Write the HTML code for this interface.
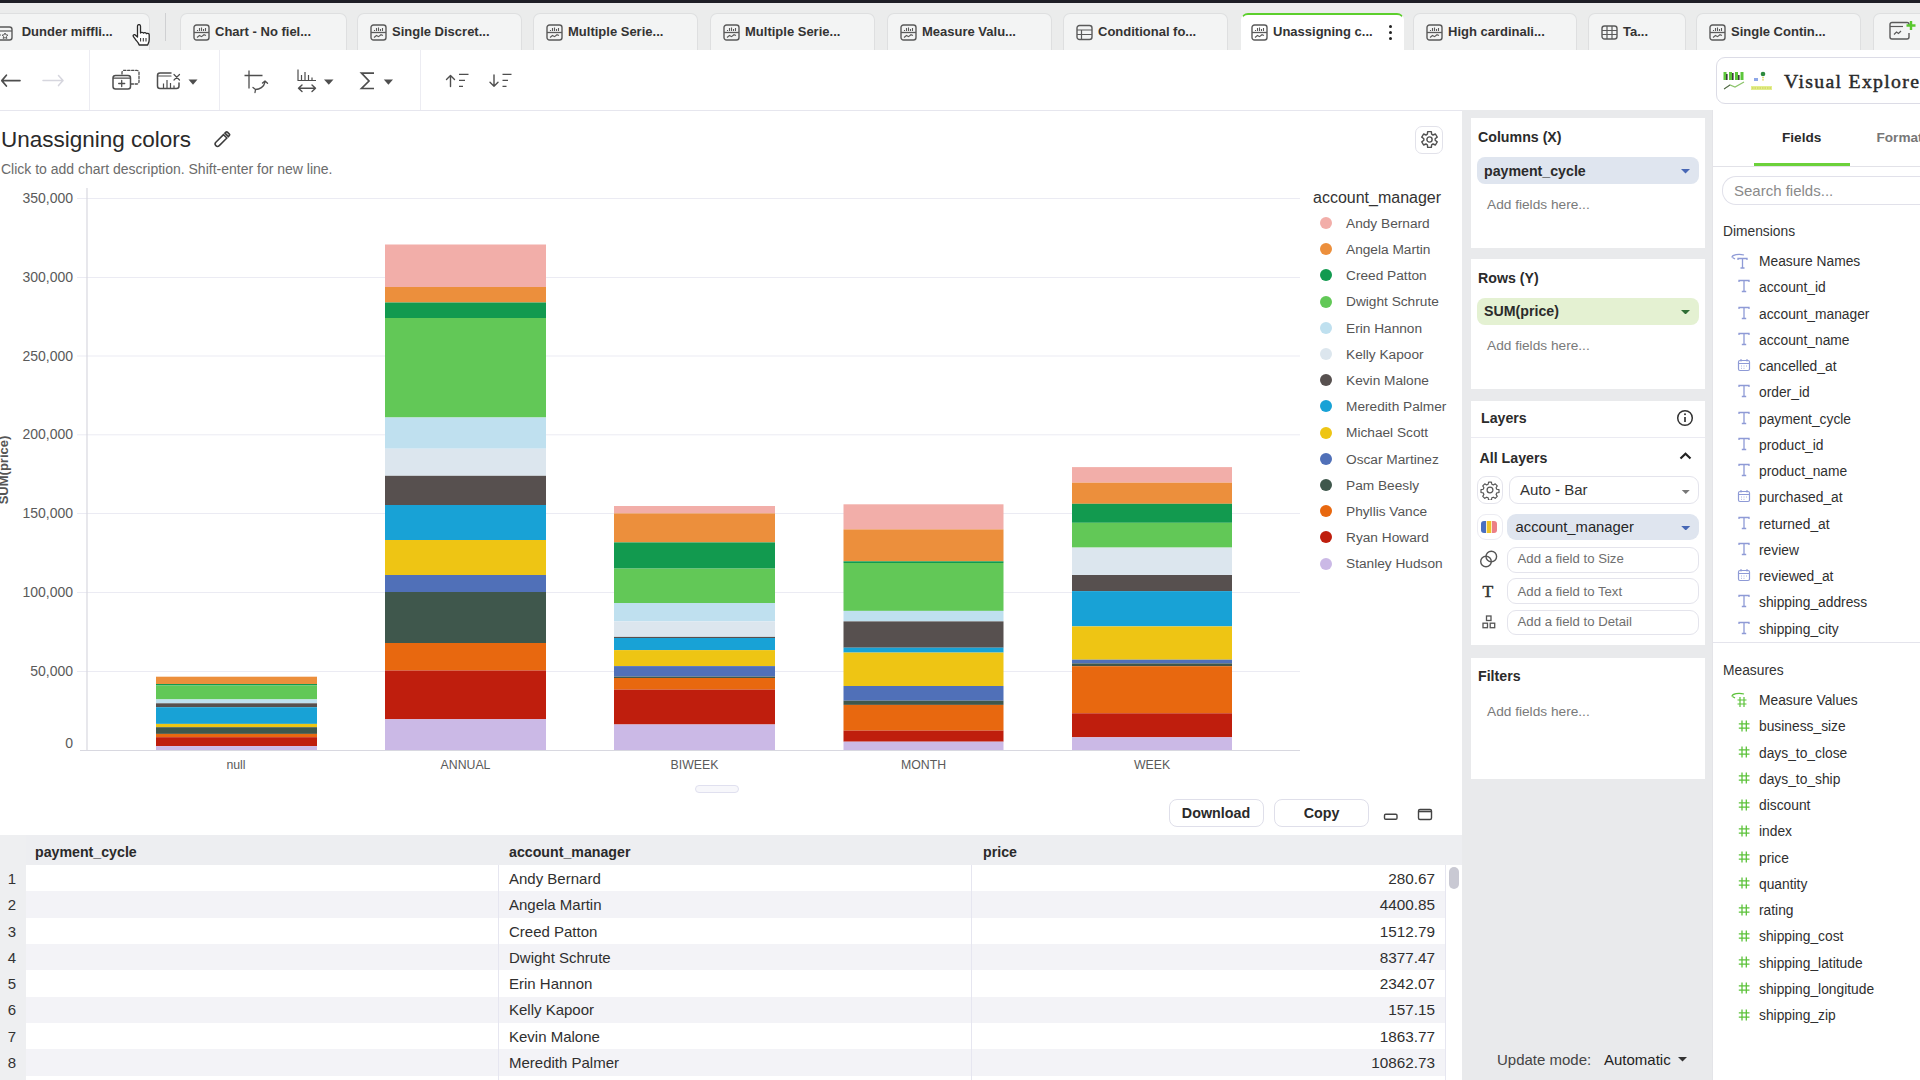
<!DOCTYPE html>
<html><head><meta charset="utf-8">
<style>
*{box-sizing:border-box;margin:0;padding:0}
html,body{width:1920px;height:1080px;overflow:hidden;background:#fff;font-family:"Liberation Sans",sans-serif;color:#2b2b2b}
.a{position:absolute}
.t{position:absolute;white-space:nowrap;line-height:20px}
#topbar{left:0;top:0;width:1920px;height:3px;background:#1d1d25}
#tabbar{left:0;top:3px;width:1920px;height:47px;background:#ebecec}
.tab{position:absolute;top:13px;height:37px;background:#f3f4f4;border:1px solid #dedfe0;border-bottom:none;border-radius:7px 7px 0 0}
.tab .tx{position:absolute;left:34px;top:8px;font-weight:bold;font-size:13px;color:#333;line-height:20px;white-space:nowrap}
.tab svg{position:absolute;left:12px;top:10px}
.tab.act{background:#fff;border-color:#fff;border-top:2px solid #5ccf2c}
.tab.act svg{left:9px;top:8.5px}
.tab.act .tx{left:31px;top:7.3px}
#toolbar{left:0;top:50px;width:1920px;height:61px;background:#fff;border-bottom:1px solid #e6e6ee}
.sep{position:absolute;top:0;width:1px;height:60px;background:#ececf2}
#rp{left:1462px;top:110px;width:250px;height:970px;background:#e9eaec}
.card{position:absolute;left:8px;width:235px;background:#fff}
.ch{position:absolute;left:8px;font-weight:bold;font-size:14px;color:#2b2b2b;line-height:20px;white-space:nowrap}
.pill{position:absolute;left:7px;width:221px;height:25px;border-radius:8px}
.pill .tx{position:absolute;left:7px;top:2px;font-weight:bold;font-size:14px;line-height:20px;color:#2b2b2b}
.addf{position:absolute;left:16px;font-size:13.7px;color:#777;line-height:20px;white-space:nowrap}
#fp{left:1712px;top:110px;width:208px;height:970px;background:#fff;border-left:1px solid #e4e4e8}
.fi{position:absolute;left:46px;font-size:13.6px;color:#2f2f2f;line-height:18px;white-space:nowrap}
.fic{position:absolute;left:28px}
</style></head><body>
<div id="topbar" class="a"></div>
<div id="tabbar" class="a"></div>
<div class="a" style="left:0;top:0;width:1920px;height:50px">
<div class="tab" style="left:-14px;width:164px"><svg style="left:8.5px;top:10.5px" width="17" height="17" viewBox="0 0 17 17"><rect x="1" y="2" width="15" height="13" rx="2.5" fill="none" stroke="#5a5a5a" stroke-width="1.4"/><path d="M1 6H16" stroke="#5a5a5a" stroke-width="1.2"/><path d="M2 10H5M9 8l0.9 1.8 2 0.3-1.45 1.4 0.35 2-1.8-0.95-1.8 0.95 0.35-2-1.45-1.4 2-0.3z" stroke="#5a5a5a" stroke-width="1" fill="none"/></svg><div class="tx" style="left:34.7px">Dunder miffli...</div></div>
<div class="tab" style="left:180px;width:167px"><svg width="17" height="17" viewBox="0 0 17 17"><rect x="1" y="1" width="15" height="15" rx="2.5" fill="none" stroke="#5a5a5a" stroke-width="1.4"/><path d="M1 8.5H16" stroke="#5a5a5a" stroke-width="1.3"/><path d="M4.5 7V6M6.5 7V4M8.5 7V3.5M10.5 7V5M12.5 7V4" stroke="#5a5a5a" stroke-width="1.1"/><path d="M4 13.5l2.5-2 2 1.2 2.5-2 2 0.8" fill="none" stroke="#5a5a5a" stroke-width="1.1"/></svg><div class="tx">Chart - No fiel...</div></div>
<div class="tab" style="left:357px;width:165px"><svg width="17" height="17" viewBox="0 0 17 17"><rect x="1" y="1" width="15" height="15" rx="2.5" fill="none" stroke="#5a5a5a" stroke-width="1.4"/><path d="M1 8.5H16" stroke="#5a5a5a" stroke-width="1.3"/><path d="M4.5 7V6M6.5 7V4M8.5 7V3.5M10.5 7V5M12.5 7V4" stroke="#5a5a5a" stroke-width="1.1"/><path d="M4 13.5l2.5-2 2 1.2 2.5-2 2 0.8" fill="none" stroke="#5a5a5a" stroke-width="1.1"/></svg><div class="tx">Single Discret...</div></div>
<div class="tab" style="left:533px;width:165px"><svg width="17" height="17" viewBox="0 0 17 17"><rect x="1" y="1" width="15" height="15" rx="2.5" fill="none" stroke="#5a5a5a" stroke-width="1.4"/><path d="M1 8.5H16" stroke="#5a5a5a" stroke-width="1.3"/><path d="M4.5 7V6M6.5 7V4M8.5 7V3.5M10.5 7V5M12.5 7V4" stroke="#5a5a5a" stroke-width="1.1"/><path d="M4 13.5l2.5-2 2 1.2 2.5-2 2 0.8" fill="none" stroke="#5a5a5a" stroke-width="1.1"/></svg><div class="tx">Multiple Serie...</div></div>
<div class="tab" style="left:710px;width:165px"><svg width="17" height="17" viewBox="0 0 17 17"><rect x="1" y="1" width="15" height="15" rx="2.5" fill="none" stroke="#5a5a5a" stroke-width="1.4"/><path d="M1 8.5H16" stroke="#5a5a5a" stroke-width="1.3"/><path d="M4.5 7V6M6.5 7V4M8.5 7V3.5M10.5 7V5M12.5 7V4" stroke="#5a5a5a" stroke-width="1.1"/><path d="M4 13.5l2.5-2 2 1.2 2.5-2 2 0.8" fill="none" stroke="#5a5a5a" stroke-width="1.1"/></svg><div class="tx">Multiple Serie...</div></div>
<div class="tab" style="left:887px;width:165px"><svg width="17" height="17" viewBox="0 0 17 17"><rect x="1" y="1" width="15" height="15" rx="2.5" fill="none" stroke="#5a5a5a" stroke-width="1.4"/><path d="M1 8.5H16" stroke="#5a5a5a" stroke-width="1.3"/><path d="M4.5 7V6M6.5 7V4M8.5 7V3.5M10.5 7V5M12.5 7V4" stroke="#5a5a5a" stroke-width="1.1"/><path d="M4 13.5l2.5-2 2 1.2 2.5-2 2 0.8" fill="none" stroke="#5a5a5a" stroke-width="1.1"/></svg><div class="tx">Measure Valu...</div></div>
<div class="tab" style="left:1063px;width:165px"><svg width="17" height="17" viewBox="0 0 17 17"><rect x="1" y="1.5" width="15" height="14" rx="2.5" fill="none" stroke="#5a5a5a" stroke-width="1.4"/><path d="M1 6H16M1 10.5H16M5.5 6V15.5" stroke="#5a5a5a" stroke-width="1.2"/></svg><div class="tx">Conditional fo...</div></div>
<div class="tab act" style="left:1241px;width:163px"><svg width="17" height="17" viewBox="0 0 17 17"><rect x="1" y="1" width="15" height="15" rx="2.5" fill="none" stroke="#5a5a5a" stroke-width="1.4"/><path d="M1 8.5H16" stroke="#5a5a5a" stroke-width="1.3"/><path d="M4.5 7V6M6.5 7V4M8.5 7V3.5M10.5 7V5M12.5 7V4" stroke="#5a5a5a" stroke-width="1.1"/><path d="M4 13.5l2.5-2 2 1.2 2.5-2 2 0.8" fill="none" stroke="#5a5a5a" stroke-width="1.1"/></svg><div class="tx">Unassigning c...</div><div class="a" style="left:147px;top:10px;width:4px;height:16px"><div class="a" style="left:0;top:0;width:3.2px;height:3.2px;border-radius:2px;background:#222"></div><div class="a" style="left:0;top:6px;width:3.2px;height:3.2px;border-radius:2px;background:#222"></div><div class="a" style="left:0;top:12px;width:3.2px;height:3.2px;border-radius:2px;background:#222"></div></div></div>
<div class="tab" style="left:1413px;width:164px"><svg width="17" height="17" viewBox="0 0 17 17"><rect x="1" y="1" width="15" height="15" rx="2.5" fill="none" stroke="#5a5a5a" stroke-width="1.4"/><path d="M1 8.5H16" stroke="#5a5a5a" stroke-width="1.3"/><path d="M4.5 7V6M6.5 7V4M8.5 7V3.5M10.5 7V5M12.5 7V4" stroke="#5a5a5a" stroke-width="1.1"/><path d="M4 13.5l2.5-2 2 1.2 2.5-2 2 0.8" fill="none" stroke="#5a5a5a" stroke-width="1.1"/></svg><div class="tx">High cardinali...</div></div>
<div class="tab" style="left:1588px;width:98px"><svg width="17" height="17" viewBox="0 0 17 17"><rect x="1" y="2" width="15" height="13" rx="2.5" fill="none" stroke="#5a5a5a" stroke-width="1.4"/><path d="M1 6.5H16M1 10.5H16M6 2V15M11 2V15" stroke="#5a5a5a" stroke-width="1.2"/></svg><div class="tx">Ta...</div></div>
<div class="tab" style="left:1696px;width:165px"><svg width="17" height="17" viewBox="0 0 17 17"><rect x="1" y="1" width="15" height="15" rx="2.5" fill="none" stroke="#5a5a5a" stroke-width="1.4"/><path d="M1 8.5H16" stroke="#5a5a5a" stroke-width="1.3"/><path d="M4.5 7V6M6.5 7V4M8.5 7V3.5M10.5 7V5M12.5 7V4" stroke="#5a5a5a" stroke-width="1.1"/><path d="M4 13.5l2.5-2 2 1.2 2.5-2 2 0.8" fill="none" stroke="#5a5a5a" stroke-width="1.1"/></svg><div class="tx">Single Contin...</div></div>
<div class="tab" style="left:1873px;width:80px"><svg style="left:14px;top:6px;position:absolute" width="30" height="22" viewBox="0 0 30 22"><path d="M21 6V4.5a2 2 0 0 0-2-2H4a2 2 0 0 0-2 2V17a2 2 0 0 0 2 2h15a2 2 0 0 0 2-2v-4" fill="none" stroke="#5a5a5a" stroke-width="1.4"/><path d="M2 6.5H15" stroke="#5a5a5a" stroke-width="1.2"/><path d="M6 14.5l2.5-2.5 2 1.5 2.5-2.5" fill="none" stroke="#5a5a5a" stroke-width="1.2"/><path d="M23 1V10M18.5 5.5H27.5" stroke="#59c82e" stroke-width="2.4"/></svg></div>
<div class="a" style="left:165px;top:13px;width:1px;height:28px;background:#cfd0d2"></div>
<svg class="a" style="left:132px;top:24px" width="20" height="23" viewBox="0 0 20 23"><path d="M5.5 2.2c0-1 .7-1.6 1.5-1.6s1.5.6 1.5 1.6V9c.3-.9 2.8-.9 3 .2.5-.8 2.6-.7 2.9.5.6-.6 2.6-.4 2.8.9v5.2c0 2.5-1 3.6-1.6 5.2H7.2C6.6 19 5.4 17.8 4 16.2L1.4 12.6c-.7-1 .2-2.4 1.5-1.9l2.6 2.3Z" fill="#fff" stroke="#2a2a2a" stroke-width="1.3" stroke-linejoin="round"/><path d="M8.6 14V17.5M11.3 14V17.5M14 14V17.5" stroke="#2a2a2a" stroke-width="1"/></svg>
</div>
<div id="toolbar" class="a"></div>
<svg class="a" style="left:0;top:0" width="540" height="110" viewBox="0 0 540 110">
<g fill="none" stroke="#4e4e4e" stroke-width="1.5" stroke-linecap="round" stroke-linejoin="round">
<path d="M2 80.6H20M1.8 80.6l4.6-5.4M1.8 80.6l4.6 5.4" stroke-width="1.7"/>
<path d="M43 80.6H63M63 80.6l-4.5-5M63 80.6l-4.5 5" stroke="#d6d6de"/>
<rect x="113" y="75.5" width="17.5" height="13.5" rx="2.5"/>
<path d="M113.5 78.2H130" stroke-width="1.3"/>
<path d="M121.7 80.5V86.5M118.7 83.5H124.7" stroke-width="1.3"/>
<path d="M122 74V72.5a2.2 2.2 0 0 1 2.2-2.2H136.8a2.2 2.2 0 0 1 2.2 2.2V81.8a2.2 2.2 0 0 1-2.2 2.2H131" stroke-dasharray="2.4 1.6" stroke-width="1.3"/>
<path d="M171 73H160a2.5 2.5 0 0 0-2.5 2.5V86a2.5 2.5 0 0 0 2.5 2.5H176.5a2.5 2.5 0 0 0 2.5-2.5V83"/>
<path d="M158 76H171" stroke-width="1.2"/>
<path d="M163.5 88V83.5M167 88V80M170.5 88V83M174 88V85.5" stroke-width="1.2" stroke-linecap="butt"/>
<path d="M174 74.5l5.5 5.5M179.5 74.5l-5.5 5.5" stroke-width="1.2"/>
<path d="M249 70.5V88.5M244.5 75.5H262.5" stroke-width="1.3" stroke-linecap="butt"/>
<path d="M255.5 89.5c4 0 8.5-2.5 9.5-7.5M253 87.5l2.5 2 -0.5 3M262.5 83l2.5-2 2.5 2.3" stroke-width="1.3"/>
<path d="M298 69.5V80.5H316M301.5 80.5V75M305 80.5V72M308.5 80.5V75M312 80.5V77.5" stroke-width="1.2" stroke-linecap="butt"/>
<path d="M298.5 88.3H315.5M298.5 88.3l3.5-3.3M298.5 88.3l3.5 3.3M315.5 88.3l-3.5-3.3M315.5 88.3l-3.5 3.3" stroke-width="1.4"/>
<path d="M374 73.2H361.5L369 81L361.5 88.5H374" stroke-width="1.7" stroke-linecap="butt" stroke-linejoin="miter"/>
<path d="M450.5 86.5V75.5M446.5 79.5l4-4 4 4" stroke-width="1.4"/>
<path d="M459 74.3H468.5M459 80.3H465M459 86.3H463" stroke-width="1.2" stroke-linecap="butt"/>
<path d="M494 75V86.2M490 82.2l4 4 4-4" stroke-width="1.4"/>
<path d="M502.5 74.3H511.5M502.5 80.3H508M502.5 86.3H506.5" stroke-width="1.2" stroke-linecap="butt"/>
</g>
<g fill="#4e4e4e">
<path d="M188.5 79.5H197.5L193 84.8Z"/>
<path d="M324 79.5H333.5L328.8 84.8Z"/>
<path d="M383.8 79.5H393L388.4 84.8Z"/>
</g>
</svg>
<div class="sep" style="left:89px;top:50px"></div>
<div class="sep" style="left:219px;top:50px"></div>
<div class="sep" style="left:420px;top:50px"></div>
<div class="a" style="left:1716px;top:57px;width:240px;height:47px;border:1px solid #dcdce6;border-radius:9px;background:#fff"></div>
<svg class="a" style="left:1720px;top:66px" width="60" height="30" viewBox="0 0 60 30">
<g fill="#5cc63a"><rect x="3.5" y="6" width="3" height="8"/><rect x="9" y="6" width="3" height="8"/><rect x="15" y="6" width="3" height="8"/><rect x="20.5" y="6" width="3" height="8"/></g>
<g fill="#3a3a3a"><rect x="6" y="8" width="1.6" height="6"/><rect x="12" y="7" width="1.6" height="7"/><rect x="18" y="9" width="1.6" height="5"/></g>
<path d="M4 23l6-4 5 2 9-5" fill="none" stroke="#8bc46a" stroke-width="1.2"/>
<path d="M4 23l6-4" fill="none" stroke="#555" stroke-width="1"/>
<circle cx="43" cy="8" r="2.3" fill="#2e8b3e"/>
<path d="M43 11v4" stroke="#e1d24a" stroke-width="1.5" stroke-dasharray="1.2 1"/>
<rect x="34" y="12" width="4" height="3" fill="#8ea7e8"/>
<rect x="31" y="20" width="21" height="4" fill="#e2ef8e"/>
<path d="M32 22h19" stroke="#c9c442" stroke-width="0.9" stroke-dasharray="1.5 1"/>
</svg>
<div class="t" style="left:1784px;top:68.5px;font-family:'Liberation Serif',serif;font-size:19.8px;-webkit-text-stroke:0.45px #2a2a2a;letter-spacing:1.3px;color:#2a2a2a;line-height:24px">Visual Explorer</div>
<div class="t" style="left:1px;top:127px;font-size:22.5px;color:#2a2a2a;line-height:26px">Unassigning colors</div>
<svg class="a" style="left:205px;top:125px" width="32" height="32" viewBox="0 0 32 32"><g transform="translate(16.3 15.2) rotate(45)" fill="none" stroke="#3c3c3c" stroke-width="1.5"><path d="M-2.4 -5.5V5.3a2.4 2.4 0 0 0 4.8 0V-5.5Z"/><path d="M-2.4 -7.6V-9a1 1 0 0 1 1-1H1.4a1 1 0 0 1 1 1V-7.6Z" stroke-width="1.6"/></g></svg>
<div class="t" style="left:1px;top:159px;font-size:14px;color:#6b6b6b">Click to add chart description. Shift-enter for new line.</div>
<div class="a" style="left:1415px;top:126px;width:28px;height:28px;border:1px solid #e2e2ea;border-radius:7px;background:#fff"></div>
<svg class="a" style="left:1420px;top:130px" width="19" height="19" viewBox="0 0 24 24"><path d="M9.71 2.06 L14.29 2.06 L14.70 5.32 L16.43 6.33 L19.46 5.04 L21.75 9.02 L19.13 11.00 L19.13 13.00 L21.75 14.98 L19.46 18.96 L16.43 17.67 L14.70 18.68 L14.29 21.94 L9.71 21.94 L9.30 18.68 L7.57 17.67 L4.54 18.96 L2.25 14.98 L4.87 13.00 L4.87 11.00 L2.25 9.02 L4.54 5.04 L7.57 6.33 L9.30 5.32Z" fill="none" stroke="#505050" stroke-width="1.8" stroke-linejoin="round"/><circle cx="12" cy="12" r="3.3" fill="none" stroke="#505050" stroke-width="1.8"/></svg>
<svg class="a" style="left:0;top:110px" width="1462" height="700" viewBox="0 110 1462 700"><path d="M77 198.5H1300" stroke="#ebebf3" stroke-width="1"/><path d="M77 277.5H1300" stroke="#ebebf3" stroke-width="1"/><path d="M77 356.0H1300" stroke="#ebebf3" stroke-width="1"/><path d="M77 434.8H1300" stroke="#ebebf3" stroke-width="1"/><path d="M77 513.5H1300" stroke="#ebebf3" stroke-width="1"/><path d="M77 592.5H1300" stroke="#ebebf3" stroke-width="1"/><path d="M77 671.5H1300" stroke="#ebebf3" stroke-width="1"/><path d="M87 188V751" stroke="#d8d8e0" stroke-width="1.2"/><path d="M80 750.5H1300" stroke="#d8d8e0" stroke-width="1.2"/><rect x="156" y="676.7" width="161" height="7.3" fill="#ec8f3c"/><rect x="156" y="684.0" width="161" height="1.5" fill="#129a4f"/><rect x="156" y="685.5" width="161" height="13.9" fill="#62c857"/><rect x="156" y="699.4" width="161" height="3.9" fill="#bfe0ef"/><rect x="156" y="703.3" width="161" height="3.9" fill="#57504f"/><rect x="156" y="707.2" width="161" height="16.7" fill="#18a2d6"/><rect x="156" y="723.9" width="161" height="3.3" fill="#eec514"/><rect x="156" y="727.2" width="161" height="6.7" fill="#3f574c"/><rect x="156" y="733.9" width="161" height="3.3" fill="#e8680f"/><rect x="156" y="737.2" width="161" height="8.9" fill="#bf1e0d"/><rect x="156" y="746.1" width="161" height="3.9" fill="#cbb9e6"/><rect x="385" y="244.5" width="161" height="42.5" fill="#f2aea9"/><rect x="385" y="287.0" width="161" height="15.5" fill="#ec8f3c"/><rect x="385" y="302.5" width="161" height="15.5" fill="#129a4f"/><rect x="385" y="318.0" width="161" height="99.5" fill="#62c857"/><rect x="385" y="417.5" width="161" height="31.2" fill="#bfe0ef"/><rect x="385" y="448.8" width="161" height="27.0" fill="#dce6ee"/><rect x="385" y="475.8" width="161" height="29.2" fill="#57504f"/><rect x="385" y="505.0" width="161" height="35.0" fill="#18a2d6"/><rect x="385" y="540.0" width="161" height="35.0" fill="#eec514"/><rect x="385" y="575.0" width="161" height="17.0" fill="#5070b8"/><rect x="385" y="592.0" width="161" height="51.0" fill="#3f574c"/><rect x="385" y="643.0" width="161" height="27.5" fill="#e8680f"/><rect x="385" y="670.5" width="161" height="48.8" fill="#bf1e0d"/><rect x="385" y="719.2" width="161" height="30.8" fill="#cbb9e6"/><rect x="614" y="506.0" width="161" height="7.4" fill="#f2aea9"/><rect x="614" y="513.4" width="161" height="29.0" fill="#ec8f3c"/><rect x="614" y="542.4" width="161" height="26.2" fill="#129a4f"/><rect x="614" y="568.6" width="161" height="34.4" fill="#62c857"/><rect x="614" y="603.0" width="161" height="18.4" fill="#bfe0ef"/><rect x="614" y="621.4" width="161" height="15.5" fill="#dce6ee"/><rect x="614" y="636.9" width="161" height="1.1" fill="#57504f"/><rect x="614" y="638.0" width="161" height="12.1" fill="#18a2d6"/><rect x="614" y="650.1" width="161" height="16.0" fill="#eec514"/><rect x="614" y="666.1" width="161" height="10.5" fill="#5070b8"/><rect x="614" y="676.6" width="161" height="1.4" fill="#3f574c"/><rect x="614" y="678.0" width="161" height="11.6" fill="#e8680f"/><rect x="614" y="689.6" width="161" height="34.9" fill="#bf1e0d"/><rect x="614" y="724.5" width="161" height="25.5" fill="#cbb9e6"/><rect x="843.5" y="504.3" width="160.0" height="25.1" fill="#f2aea9"/><rect x="843.5" y="529.4" width="160.0" height="31.9" fill="#ec8f3c"/><rect x="843.5" y="561.3" width="160.0" height="1.7" fill="#129a4f"/><rect x="843.5" y="563.0" width="160.0" height="47.9" fill="#62c857"/><rect x="843.5" y="610.9" width="160.0" height="10.5" fill="#bfe0ef"/><rect x="843.5" y="621.4" width="160.0" height="26.3" fill="#57504f"/><rect x="843.5" y="647.7" width="160.0" height="4.9" fill="#18a2d6"/><rect x="843.5" y="652.6" width="160.0" height="33.4" fill="#eec514"/><rect x="843.5" y="686.0" width="160.0" height="14.7" fill="#5070b8"/><rect x="843.5" y="700.7" width="160.0" height="4.2" fill="#3f574c"/><rect x="843.5" y="704.9" width="160.0" height="25.7" fill="#e8680f"/><rect x="843.5" y="730.6" width="160.0" height="11.1" fill="#bf1e0d"/><rect x="843.5" y="741.7" width="160.0" height="8.3" fill="#cbb9e6"/><rect x="1072" y="467.1" width="160" height="15.6" fill="#f2aea9"/><rect x="1072" y="482.7" width="160" height="21.1" fill="#ec8f3c"/><rect x="1072" y="503.8" width="160" height="19.0" fill="#129a4f"/><rect x="1072" y="522.8" width="160" height="24.8" fill="#62c857"/><rect x="1072" y="547.6" width="160" height="27.4" fill="#dce6ee"/><rect x="1072" y="575.0" width="160" height="16.1" fill="#57504f"/><rect x="1072" y="591.1" width="160" height="35.3" fill="#18a2d6"/><rect x="1072" y="626.4" width="160" height="33.3" fill="#eec514"/><rect x="1072" y="659.7" width="160" height="3.7" fill="#5070b8"/><rect x="1072" y="663.4" width="160" height="2.8" fill="#3f574c"/><rect x="1072" y="666.2" width="160" height="47.1" fill="#e8680f"/><rect x="1072" y="713.3" width="160" height="24.0" fill="#bf1e0d"/><rect x="1072" y="737.3" width="160" height="12.7" fill="#cbb9e6"/></svg><div class="t" style="left:0;width:73px;text-align:right;top:188px;font-size:14px;color:#5a5a5a">350,000</div><div class="t" style="left:0;width:73px;text-align:right;top:267px;font-size:14px;color:#5a5a5a">300,000</div><div class="t" style="left:0;width:73px;text-align:right;top:345.5px;font-size:14px;color:#5a5a5a">250,000</div><div class="t" style="left:0;width:73px;text-align:right;top:424.3px;font-size:14px;color:#5a5a5a">200,000</div><div class="t" style="left:0;width:73px;text-align:right;top:503px;font-size:14px;color:#5a5a5a">150,000</div><div class="t" style="left:0;width:73px;text-align:right;top:582px;font-size:14px;color:#5a5a5a">100,000</div><div class="t" style="left:0;width:73px;text-align:right;top:661px;font-size:14px;color:#5a5a5a">50,000</div><div class="t" style="left:0;width:73px;text-align:right;top:733px;font-size:14px;color:#5a5a5a">0</div><div class="t" style="left:176px;width:120px;text-align:center;top:754.5px;font-size:12.3px;color:#5a5a5a">null</div><div class="t" style="left:405.5px;width:120px;text-align:center;top:754.5px;font-size:12.3px;color:#5a5a5a">ANNUAL</div><div class="t" style="left:634.5px;width:120px;text-align:center;top:754.5px;font-size:12.3px;color:#5a5a5a">BIWEEK</div><div class="t" style="left:863.5px;width:120px;text-align:center;top:754.5px;font-size:12.3px;color:#5a5a5a">MONTH</div><div class="t" style="left:1092px;width:120px;text-align:center;top:754.5px;font-size:12.3px;color:#5a5a5a">WEEK</div><div class="t" style="left:-31px;top:459.5px;width:70px;text-align:center;transform:rotate(-90deg);font-size:13px;font-weight:bold;color:#555;line-height:20px">SUM(price)</div><div class="t" style="left:1313px;top:188px;font-size:16px;color:#333">account_manager</div><div class="a" style="left:1320px;top:217.0px;width:12px;height:12px;border-radius:6px;background:#f2aea9"></div><div class="t" style="left:1346px;top:213.8px;font-size:13.7px;color:#555">Andy Bernard</div><div class="a" style="left:1320px;top:243.2px;width:12px;height:12px;border-radius:6px;background:#ec8f3c"></div><div class="t" style="left:1346px;top:240.0px;font-size:13.7px;color:#555">Angela Martin</div><div class="a" style="left:1320px;top:269.4px;width:12px;height:12px;border-radius:6px;background:#129a4f"></div><div class="t" style="left:1346px;top:266.2px;font-size:13.7px;color:#555">Creed Patton</div><div class="a" style="left:1320px;top:295.6px;width:12px;height:12px;border-radius:6px;background:#62c857"></div><div class="t" style="left:1346px;top:292.4px;font-size:13.7px;color:#555">Dwight Schrute</div><div class="a" style="left:1320px;top:321.8px;width:12px;height:12px;border-radius:6px;background:#bfe0ef"></div><div class="t" style="left:1346px;top:318.6px;font-size:13.7px;color:#555">Erin Hannon</div><div class="a" style="left:1320px;top:348.0px;width:12px;height:12px;border-radius:6px;background:#dce6ee"></div><div class="t" style="left:1346px;top:344.8px;font-size:13.7px;color:#555">Kelly Kapoor</div><div class="a" style="left:1320px;top:374.2px;width:12px;height:12px;border-radius:6px;background:#57504f"></div><div class="t" style="left:1346px;top:371.0px;font-size:13.7px;color:#555">Kevin Malone</div><div class="a" style="left:1320px;top:400.4px;width:12px;height:12px;border-radius:6px;background:#18a2d6"></div><div class="t" style="left:1346px;top:397.2px;font-size:13.7px;color:#555">Meredith Palmer</div><div class="a" style="left:1320px;top:426.6px;width:12px;height:12px;border-radius:6px;background:#eec514"></div><div class="t" style="left:1346px;top:423.4px;font-size:13.7px;color:#555">Michael Scott</div><div class="a" style="left:1320px;top:452.8px;width:12px;height:12px;border-radius:6px;background:#5070b8"></div><div class="t" style="left:1346px;top:449.6px;font-size:13.7px;color:#555">Oscar Martinez</div><div class="a" style="left:1320px;top:479.0px;width:12px;height:12px;border-radius:6px;background:#3f574c"></div><div class="t" style="left:1346px;top:475.8px;font-size:13.7px;color:#555">Pam Beesly</div><div class="a" style="left:1320px;top:505.2px;width:12px;height:12px;border-radius:6px;background:#e8680f"></div><div class="t" style="left:1346px;top:502.0px;font-size:13.7px;color:#555">Phyllis Vance</div><div class="a" style="left:1320px;top:531.4px;width:12px;height:12px;border-radius:6px;background:#bf1e0d"></div><div class="t" style="left:1346px;top:528.2px;font-size:13.7px;color:#555">Ryan Howard</div><div class="a" style="left:1320px;top:557.6px;width:12px;height:12px;border-radius:6px;background:#cbb9e6"></div><div class="t" style="left:1346px;top:554.4px;font-size:13.7px;color:#555">Stanley Hudson</div>
<div class="a" style="left:695px;top:785px;width:44px;height:8px;border:1px solid #e0e0ef;border-radius:4px;background:#f7f7fb"></div>
<div class="a" style="left:1168.5px;top:798.5px;width:95px;height:28px;border:1px solid #dfdfea;border-radius:8px"></div>
<div class="t" style="left:1168.5px;top:803px;width:95px;text-align:center;font-size:14.3px;font-weight:bold;color:#2a2a2a">Download</div>
<div class="a" style="left:1274px;top:798.5px;width:95px;height:28px;border:1px solid #dfdfea;border-radius:8px"></div>
<div class="t" style="left:1274px;top:803px;width:95px;text-align:center;font-size:14.3px;font-weight:bold;color:#2a2a2a">Copy</div>
<svg class="a" style="left:1380px;top:800px" width="60" height="25" viewBox="1380 800 60 25"><rect x="1384.5" y="814.3" width="12.5" height="5" rx="1.2" fill="none" stroke="#444" stroke-width="1.4"/><rect x="1418.5" y="809.5" width="13" height="10" rx="1.5" fill="none" stroke="#444" stroke-width="1.4"/><path d="M1418.5 811.5H1431.5" stroke="#444" stroke-width="1.6"/></svg>
<div class="a" style="left:0;top:835px;width:1462px;height:30px;background:#edeef1"></div>
<div class="a" style="left:0;top:835px;width:26px;height:245px;background:#eeeff1"></div>
<div class="a" style="left:26px;top:865.00px;width:1420px;height:26.35px;background:#ffffff"></div>
<div class="t" style="left:0;width:24px;text-align:center;top:868.9px;font-size:15px;color:#333">1</div>
<div class="t" style="left:509px;top:868.9px;font-size:15px;color:#2f2f2f">Andy Bernard</div>
<div class="t" style="left:1000px;width:435px;text-align:right;top:868.9px;font-size:15.3px;color:#2f2f2f">280.67</div>
<div class="a" style="left:26px;top:891.35px;width:1420px;height:26.35px;background:#f3f3f7"></div>
<div class="t" style="left:0;width:24px;text-align:center;top:895.2px;font-size:15px;color:#333">2</div>
<div class="t" style="left:509px;top:895.2px;font-size:15px;color:#2f2f2f">Angela Martin</div>
<div class="t" style="left:1000px;width:435px;text-align:right;top:895.2px;font-size:15.3px;color:#2f2f2f">4400.85</div>
<div class="a" style="left:26px;top:917.70px;width:1420px;height:26.35px;background:#ffffff"></div>
<div class="t" style="left:0;width:24px;text-align:center;top:921.5px;font-size:15px;color:#333">3</div>
<div class="t" style="left:509px;top:921.5px;font-size:15px;color:#2f2f2f">Creed Patton</div>
<div class="t" style="left:1000px;width:435px;text-align:right;top:921.5px;font-size:15.3px;color:#2f2f2f">1512.79</div>
<div class="a" style="left:26px;top:944.05px;width:1420px;height:26.35px;background:#f3f3f7"></div>
<div class="t" style="left:0;width:24px;text-align:center;top:947.8px;font-size:15px;color:#333">4</div>
<div class="t" style="left:509px;top:947.8px;font-size:15px;color:#2f2f2f">Dwight Schrute</div>
<div class="t" style="left:1000px;width:435px;text-align:right;top:947.8px;font-size:15.3px;color:#2f2f2f">8377.47</div>
<div class="a" style="left:26px;top:970.40px;width:1420px;height:26.35px;background:#ffffff"></div>
<div class="t" style="left:0;width:24px;text-align:center;top:974.1px;font-size:15px;color:#333">5</div>
<div class="t" style="left:509px;top:974.1px;font-size:15px;color:#2f2f2f">Erin Hannon</div>
<div class="t" style="left:1000px;width:435px;text-align:right;top:974.1px;font-size:15.3px;color:#2f2f2f">2342.07</div>
<div class="a" style="left:26px;top:996.75px;width:1420px;height:26.35px;background:#f3f3f7"></div>
<div class="t" style="left:0;width:24px;text-align:center;top:1000.4px;font-size:15px;color:#333">6</div>
<div class="t" style="left:509px;top:1000.4px;font-size:15px;color:#2f2f2f">Kelly Kapoor</div>
<div class="t" style="left:1000px;width:435px;text-align:right;top:1000.4px;font-size:15.3px;color:#2f2f2f">157.15</div>
<div class="a" style="left:26px;top:1023.10px;width:1420px;height:26.35px;background:#ffffff"></div>
<div class="t" style="left:0;width:24px;text-align:center;top:1026.7px;font-size:15px;color:#333">7</div>
<div class="t" style="left:509px;top:1026.7px;font-size:15px;color:#2f2f2f">Kevin Malone</div>
<div class="t" style="left:1000px;width:435px;text-align:right;top:1026.7px;font-size:15.3px;color:#2f2f2f">1863.77</div>
<div class="a" style="left:26px;top:1049.45px;width:1420px;height:26.35px;background:#f3f3f7"></div>
<div class="t" style="left:0;width:24px;text-align:center;top:1053.0px;font-size:15px;color:#333">8</div>
<div class="t" style="left:509px;top:1053.0px;font-size:15px;color:#2f2f2f">Meredith Palmer</div>
<div class="t" style="left:1000px;width:435px;text-align:right;top:1053.0px;font-size:15.3px;color:#2f2f2f">10862.73</div>
<div class="a" style="left:26px;top:1075.80px;width:1420px;height:26.35px;background:#ffffff"></div>
<div class="a" style="left:498px;top:865px;width:1px;height:215px;background:#e6e6f0"></div>
<div class="a" style="left:971px;top:865px;width:1px;height:215px;background:#e6e6f0"></div>
<div class="a" style="left:1445px;top:865px;width:1px;height:215px;background:#e6e6f0"></div>
<div class="t" style="left:35px;top:842px;font-size:14.2px;font-weight:bold;color:#2a2a2a">payment_cycle</div>
<div class="t" style="left:509px;top:842px;font-size:14.2px;font-weight:bold;color:#2a2a2a">account_manager</div>
<div class="t" style="left:983px;top:842px;font-size:14.2px;font-weight:bold;color:#2a2a2a">price</div>
<div class="a" style="left:1449px;top:867px;width:10px;height:22px;border-radius:5px;background:#c9c9d3"></div>
<div id="rp" class="a"></div>
<div id="fp" class="a"></div>
<div class="a" style="left:1470.5px;top:117.6px;width:234.2px;height:130.4px;background:#fff"></div>
<div class="a" style="left:1470.5px;top:259px;width:234.2px;height:129.5px;background:#fff"></div>
<div class="a" style="left:1470.5px;top:401px;width:234.2px;height:244.0px;background:#fff"></div>
<div class="a" style="left:1470.5px;top:657.5px;width:234.2px;height:121.5px;background:#fff"></div>
<div class="t" style="left:1478px;top:127.0px;font-size:14.2px;font-weight:bold;color:#2b2b2b;">Columns (X)</div>
<div class="a" style="left:1476.5px;top:157px;width:222.5px;height:27px;background:#dfe5ef;border-radius:8px"></div>
<div class="t" style="left:1484px;top:160.5px;font-size:14.2px;font-weight:bold;color:#2b2b2b;">payment_cycle</div>
<svg class="a" style="left:1681px;top:169px" width="9" height="4.5" viewBox="0 0 10 5"><path d="M0 0H10L5 5Z" fill="#4767b5"/></svg>
<div class="t" style="left:1487px;top:195.0px;font-size:13.7px;font-weight:normal;color:#7a7a7a;">Add fields here...</div>
<div class="t" style="left:1478px;top:268.0px;font-size:14.2px;font-weight:bold;color:#2b2b2b;">Rows (Y)</div>
<div class="a" style="left:1476.5px;top:297.8px;width:222.5px;height:27px;background:#e4f1d2;border-radius:8px"></div>
<div class="t" style="left:1484px;top:301.0px;font-size:14.2px;font-weight:bold;color:#2b2b2b;">SUM(price)</div>
<svg class="a" style="left:1681px;top:309.5px" width="9" height="4.5" viewBox="0 0 10 5"><path d="M0 0H10L5 5Z" fill="#2f6e35"/></svg>
<div class="t" style="left:1487px;top:336.0px;font-size:13.7px;font-weight:normal;color:#7a7a7a;">Add fields here...</div>
<div class="t" style="left:1481px;top:408.3px;font-size:14.2px;font-weight:bold;color:#2b2b2b;">Layers</div>
<svg class="a" style="left:1676px;top:409px" width="18" height="18" viewBox="0 0 18 18"><circle cx="9" cy="9" r="7.3" fill="none" stroke="#333" stroke-width="1.5"/><path d="M9 8V13" stroke="#333" stroke-width="1.7"/><circle cx="9" cy="5.3" r="1" fill="#333"/></svg>
<div class="a" style="left:1471px;top:436.5px;width:234.0px;height:1.0px;background:#ebebf2"></div>
<div class="t" style="left:1479.5px;top:448.2px;font-size:14.2px;font-weight:bold;color:#2b2b2b;">All Layers</div>
<svg class="a" style="left:1679px;top:452px" width="13" height="8" viewBox="0 0 13 8"><path d="M1.5 6.5L6.5 1.8L11.5 6.5" fill="none" stroke="#222" stroke-width="2.2"/></svg>
<div class="a" style="left:1476.7px;top:476px;width:26.3px;height:28.2px;border:1px solid #e4e4ec;border-radius:9px"></div>
<svg class="a" style="left:1480px;top:480px" width="20" height="20" viewBox="0 0 24 24"><path d="M12 8.5a3.5 3.5 0 1 0 0 7a3.5 3.5 0 1 0 0-7Z" fill="none" stroke="#555" stroke-width="1.5"/><path d="M10.3 2.5h3.4l.5 2.6 1.8.9 2.3-1.4 2.4 2.4-1.4 2.3.8 1.8 2.7.5v3.4l-2.7.5-.8 1.8 1.4 2.3-2.4 2.4-2.3-1.4-1.8.8-.5 2.7h-3.4l-.5-2.7-1.8-.8-2.3 1.4-2.4-2.4 1.4-2.3-.8-1.8-2.7-.5v-3.4l2.7-.5.8-1.8-1.4-2.3 2.4-2.4 2.3 1.4 1.8-.9Z" fill="none" stroke="#555" stroke-width="1.4" stroke-linejoin="round"/></svg>
<div class="a" style="left:1509.3px;top:476px;width:190.0px;height:28.2px;border:1px solid #e4e4ec;border-radius:9px"></div>
<div class="t" style="left:1520px;top:480.0px;font-size:15px;font-weight:normal;color:#333;">Auto - Bar</div>
<svg class="a" style="left:1681px;top:489.5px" width="9.5" height="4.0" viewBox="0 0 10 5"><path d="M0 0H10L5 5Z" fill="#777"/></svg>
<div class="a" style="left:1476.7px;top:513.9px;width:26.3px;height:26.1px;border:1px solid #ececf2;border-radius:9px"></div>
<svg class="a" style="left:1480px;top:520px" width="18" height="14" viewBox="0 0 18 14"><path d="M4 1H6V13H4A3 3 0 0 1 1 10V4A3 3 0 0 1 4 1Z" fill="#4a6fc0"/><rect x="6.7" y="1" width="4.6" height="12" fill="#eec32a"/><path d="M12 1H14A3 3 0 0 1 17 4V10A3 3 0 0 1 14 13H12Z" fill="#ec7f86"/></svg>
<div class="a" style="left:1506.8px;top:513.9px;width:192.5px;height:26.1px;background:#dfe5ef;border-radius:9px"></div>
<div class="t" style="left:1515.5px;top:516.8px;font-size:14.8px;font-weight:normal;color:#262626;">account_manager</div>
<svg class="a" style="left:1681px;top:525.5px" width="9.5" height="4.5" viewBox="0 0 10 5"><path d="M0 0H10L5 5Z" fill="#4767b5"/></svg>
<div class="a" style="left:1506.8px;top:547px;width:192.5px;height:25.6px;border:1px solid #e4e4ec;border-radius:9px"></div>
<div class="t" style="left:1517.5px;top:548.8px;font-size:13.2px;font-weight:normal;color:#6f6f6f;">Add a field to Size</div>
<div class="a" style="left:1506.8px;top:578px;width:192.5px;height:25.6px;border:1px solid #e4e4ec;border-radius:9px"></div>
<div class="t" style="left:1517.5px;top:581.6px;font-size:13.2px;font-weight:normal;color:#6f6f6f;">Add a field to Text</div>
<div class="a" style="left:1506.8px;top:610px;width:192.5px;height:25.4px;border:1px solid #e4e4ec;border-radius:9px"></div>
<div class="t" style="left:1517.5px;top:612px;font-size:13.2px;font-weight:normal;color:#6f6f6f;">Add a field to Detail</div>
<svg class="a" style="left:1479px;top:549px" width="20" height="20" viewBox="0 0 20 20"><circle cx="7" cy="12.5" r="5.3" fill="none" stroke="#555" stroke-width="1.4"/><circle cx="12.3" cy="7.5" r="5.3" fill="none" stroke="#555" stroke-width="1.4"/></svg>
<div class="t" style="left:1482.5px;top:581px;font-family:'Liberation Serif',serif;font-size:17.5px;color:#333;line-height:20px;font-weight:normal;-webkit-text-stroke:0.5px #333">T</div>
<svg class="a" style="left:1482px;top:615px" width="14" height="14" viewBox="0 0 14 14"><g fill="none" stroke="#555" stroke-width="1.3"><rect x="4.5" y="1" width="4.5" height="4.5"/><rect x="1" y="8.2" width="4.5" height="4.5"/><rect x="8.2" y="8.2" width="4.5" height="4.5"/></g></svg>
<div class="t" style="left:1478px;top:666.0px;font-size:14.2px;font-weight:bold;color:#2b2b2b;">Filters</div>
<div class="t" style="left:1487px;top:702.0px;font-size:13.7px;font-weight:normal;color:#7a7a7a;">Add fields here...</div>
<div class="t" style="left:1497px;top:1050.0px;font-size:15px;font-weight:normal;color:#444;">Update mode:</div>
<div class="t" style="left:1604px;top:1050.0px;font-size:15px;font-weight:normal;color:#222;">Automatic</div>
<svg class="a" style="left:1678px;top:1057px" width="9" height="4.5" viewBox="0 0 10 5"><path d="M0 0H10L5 5Z" fill="#333"/></svg>
<div class="t" style="left:1782px;top:128.0px;font-size:13.6px;font-weight:bold;color:#2a2a2a;">Fields</div>
<div class="t" style="left:1876.5px;top:128.0px;font-size:13.6px;font-weight:bold;color:#777;">Format</div>
<div class="a" style="left:1753.5px;top:163px;width:96.0px;height:3.0px;background:#6cd13a"></div>
<div class="a" style="left:1713px;top:166px;width:207.0px;height:1.0px;background:#e2e2e8"></div>
<div class="a" style="left:1722px;top:176px;width:238.0px;height:29.0px;border:1px solid #e1e1ea;border-radius:14px;border-right:none"></div>
<div class="t" style="left:1734px;top:181.0px;font-size:15px;font-weight:normal;color:#8a8a8a;">Search fields...</div>
<div class="t" style="left:1723px;top:222.0px;font-size:13.8px;font-weight:normal;color:#333;">Dimensions</div>
<svg class="a" style="left:1730px;top:252.0px" width="22" height="18" viewBox="0 0 22 18"><path d="M2 5.5C2 2.5 9 1.5 14 3" fill="none" stroke="#8e9ad6" stroke-width="1.3"/><path d="M2.5 5.5L5 7" stroke="#8e9ad6" stroke-width="1.2"/><path d="M8 8V6.5H17V8M12.5 6.5V16M10.5 16H14.5" fill="none" stroke="#8e9ad6" stroke-width="1.3"/></svg>
<div class="t" style="left:1759px;top:252.0px;font-size:13.8px;font-weight:normal;color:#2f2f2f;">Measure Names</div>
<svg class="a" style="left:1737px;top:279.2px" width="14" height="14" viewBox="0 0 14 14"><path d="M2 3V1.5H12V3M7 1.5V12.5M4.8 12.5H9.2" fill="none" stroke="#8e9ad6" stroke-width="1.3"/></svg>
<div class="t" style="left:1759px;top:278.2px;font-size:13.8px;font-weight:normal;color:#2f2f2f;">account_id</div>
<svg class="a" style="left:1737px;top:305.5px" width="14" height="14" viewBox="0 0 14 14"><path d="M2 3V1.5H12V3M7 1.5V12.5M4.8 12.5H9.2" fill="none" stroke="#8e9ad6" stroke-width="1.3"/></svg>
<div class="t" style="left:1759px;top:304.5px;font-size:13.8px;font-weight:normal;color:#2f2f2f;">account_manager</div>
<svg class="a" style="left:1737px;top:331.8px" width="14" height="14" viewBox="0 0 14 14"><path d="M2 3V1.5H12V3M7 1.5V12.5M4.8 12.5H9.2" fill="none" stroke="#8e9ad6" stroke-width="1.3"/></svg>
<div class="t" style="left:1759px;top:330.8px;font-size:13.8px;font-weight:normal;color:#2f2f2f;">account_name</div>
<svg class="a" style="left:1737px;top:358.0px" width="14" height="14" viewBox="0 0 14 14"><rect x="1.5" y="2.5" width="11" height="10" rx="1.5" fill="none" stroke="#8e9ad6" stroke-width="1.2"/><path d="M1.5 5.5H12.5M4 1V3.5M10 1V3.5" stroke="#8e9ad6" stroke-width="1.1"/><path d="M4 8H5M6.5 8H7.5M9 8H10M4 10.3H5M6.5 10.3H7.5" stroke="#aab3e0" stroke-width="1"/></svg>
<div class="t" style="left:1759px;top:357.0px;font-size:13.8px;font-weight:normal;color:#2f2f2f;">cancelled_at</div>
<svg class="a" style="left:1737px;top:384.2px" width="14" height="14" viewBox="0 0 14 14"><path d="M2 3V1.5H12V3M7 1.5V12.5M4.8 12.5H9.2" fill="none" stroke="#8e9ad6" stroke-width="1.3"/></svg>
<div class="t" style="left:1759px;top:383.2px;font-size:13.8px;font-weight:normal;color:#2f2f2f;">order_id</div>
<svg class="a" style="left:1737px;top:410.5px" width="14" height="14" viewBox="0 0 14 14"><path d="M2 3V1.5H12V3M7 1.5V12.5M4.8 12.5H9.2" fill="none" stroke="#8e9ad6" stroke-width="1.3"/></svg>
<div class="t" style="left:1759px;top:409.5px;font-size:13.8px;font-weight:normal;color:#2f2f2f;">payment_cycle</div>
<svg class="a" style="left:1737px;top:436.8px" width="14" height="14" viewBox="0 0 14 14"><path d="M2 3V1.5H12V3M7 1.5V12.5M4.8 12.5H9.2" fill="none" stroke="#8e9ad6" stroke-width="1.3"/></svg>
<div class="t" style="left:1759px;top:435.8px;font-size:13.8px;font-weight:normal;color:#2f2f2f;">product_id</div>
<svg class="a" style="left:1737px;top:463.0px" width="14" height="14" viewBox="0 0 14 14"><path d="M2 3V1.5H12V3M7 1.5V12.5M4.8 12.5H9.2" fill="none" stroke="#8e9ad6" stroke-width="1.3"/></svg>
<div class="t" style="left:1759px;top:462.0px;font-size:13.8px;font-weight:normal;color:#2f2f2f;">product_name</div>
<svg class="a" style="left:1737px;top:489.2px" width="14" height="14" viewBox="0 0 14 14"><rect x="1.5" y="2.5" width="11" height="10" rx="1.5" fill="none" stroke="#8e9ad6" stroke-width="1.2"/><path d="M1.5 5.5H12.5M4 1V3.5M10 1V3.5" stroke="#8e9ad6" stroke-width="1.1"/><path d="M4 8H5M6.5 8H7.5M9 8H10M4 10.3H5M6.5 10.3H7.5" stroke="#aab3e0" stroke-width="1"/></svg>
<div class="t" style="left:1759px;top:488.2px;font-size:13.8px;font-weight:normal;color:#2f2f2f;">purchased_at</div>
<svg class="a" style="left:1737px;top:515.5px" width="14" height="14" viewBox="0 0 14 14"><path d="M2 3V1.5H12V3M7 1.5V12.5M4.8 12.5H9.2" fill="none" stroke="#8e9ad6" stroke-width="1.3"/></svg>
<div class="t" style="left:1759px;top:514.5px;font-size:13.8px;font-weight:normal;color:#2f2f2f;">returned_at</div>
<svg class="a" style="left:1737px;top:541.8px" width="14" height="14" viewBox="0 0 14 14"><path d="M2 3V1.5H12V3M7 1.5V12.5M4.8 12.5H9.2" fill="none" stroke="#8e9ad6" stroke-width="1.3"/></svg>
<div class="t" style="left:1759px;top:540.8px;font-size:13.8px;font-weight:normal;color:#2f2f2f;">review</div>
<svg class="a" style="left:1737px;top:568.0px" width="14" height="14" viewBox="0 0 14 14"><rect x="1.5" y="2.5" width="11" height="10" rx="1.5" fill="none" stroke="#8e9ad6" stroke-width="1.2"/><path d="M1.5 5.5H12.5M4 1V3.5M10 1V3.5" stroke="#8e9ad6" stroke-width="1.1"/><path d="M4 8H5M6.5 8H7.5M9 8H10M4 10.3H5M6.5 10.3H7.5" stroke="#aab3e0" stroke-width="1"/></svg>
<div class="t" style="left:1759px;top:567.0px;font-size:13.8px;font-weight:normal;color:#2f2f2f;">reviewed_at</div>
<svg class="a" style="left:1737px;top:594.2px" width="14" height="14" viewBox="0 0 14 14"><path d="M2 3V1.5H12V3M7 1.5V12.5M4.8 12.5H9.2" fill="none" stroke="#8e9ad6" stroke-width="1.3"/></svg>
<div class="t" style="left:1759px;top:593.2px;font-size:13.8px;font-weight:normal;color:#2f2f2f;">shipping_address</div>
<svg class="a" style="left:1737px;top:620.5px" width="14" height="14" viewBox="0 0 14 14"><path d="M2 3V1.5H12V3M7 1.5V12.5M4.8 12.5H9.2" fill="none" stroke="#8e9ad6" stroke-width="1.3"/></svg>
<div class="t" style="left:1759px;top:619.5px;font-size:13.8px;font-weight:normal;color:#2f2f2f;">shipping_city</div>
<div class="a" style="left:1713px;top:642px;width:207px;height:1.0px;background:#e4e4ec"></div>
<div class="t" style="left:1723px;top:660.5px;font-size:13.8px;font-weight:normal;color:#333;">Measures</div>
<svg class="a" style="left:1730px;top:691.0px" width="22" height="18" viewBox="0 0 22 18"><path d="M2 5.5C2 2.5 9 1.5 14 3" fill="none" stroke="#5cc23a" stroke-width="1.3"/><path d="M2.5 5.5L5 7" stroke="#5cc23a" stroke-width="1.2"/><path d="M10 6V16M14 6V16M7.5 9H16.5M7.5 13H16.5" fill="none" stroke="#5cc23a" stroke-width="1.2"/></svg>
<div class="t" style="left:1759px;top:691.0px;font-size:13.8px;font-weight:normal;color:#2f2f2f;">Measure Values</div>
<svg class="a" style="left:1737px;top:718.8px" width="14" height="14" viewBox="0 0 14 14"><path d="M5 1.5V12.5M9.3 1.5V12.5M1.8 4.8H12.5M1.8 9.2H12.5" fill="none" stroke="#5cc23a" stroke-width="1.3"/></svg>
<div class="t" style="left:1759px;top:717.2px;font-size:13.8px;font-weight:normal;color:#2f2f2f;">business_size</div>
<svg class="a" style="left:1737px;top:745.0px" width="14" height="14" viewBox="0 0 14 14"><path d="M5 1.5V12.5M9.3 1.5V12.5M1.8 4.8H12.5M1.8 9.2H12.5" fill="none" stroke="#5cc23a" stroke-width="1.3"/></svg>
<div class="t" style="left:1759px;top:743.5px;font-size:13.8px;font-weight:normal;color:#2f2f2f;">days_to_close</div>
<svg class="a" style="left:1737px;top:771.2px" width="14" height="14" viewBox="0 0 14 14"><path d="M5 1.5V12.5M9.3 1.5V12.5M1.8 4.8H12.5M1.8 9.2H12.5" fill="none" stroke="#5cc23a" stroke-width="1.3"/></svg>
<div class="t" style="left:1759px;top:769.8px;font-size:13.8px;font-weight:normal;color:#2f2f2f;">days_to_ship</div>
<svg class="a" style="left:1737px;top:797.5px" width="14" height="14" viewBox="0 0 14 14"><path d="M5 1.5V12.5M9.3 1.5V12.5M1.8 4.8H12.5M1.8 9.2H12.5" fill="none" stroke="#5cc23a" stroke-width="1.3"/></svg>
<div class="t" style="left:1759px;top:796.0px;font-size:13.8px;font-weight:normal;color:#2f2f2f;">discount</div>
<svg class="a" style="left:1737px;top:823.8px" width="14" height="14" viewBox="0 0 14 14"><path d="M5 1.5V12.5M9.3 1.5V12.5M1.8 4.8H12.5M1.8 9.2H12.5" fill="none" stroke="#5cc23a" stroke-width="1.3"/></svg>
<div class="t" style="left:1759px;top:822.2px;font-size:13.8px;font-weight:normal;color:#2f2f2f;">index</div>
<svg class="a" style="left:1737px;top:850.0px" width="14" height="14" viewBox="0 0 14 14"><path d="M5 1.5V12.5M9.3 1.5V12.5M1.8 4.8H12.5M1.8 9.2H12.5" fill="none" stroke="#5cc23a" stroke-width="1.3"/></svg>
<div class="t" style="left:1759px;top:848.5px;font-size:13.8px;font-weight:normal;color:#2f2f2f;">price</div>
<svg class="a" style="left:1737px;top:876.2px" width="14" height="14" viewBox="0 0 14 14"><path d="M5 1.5V12.5M9.3 1.5V12.5M1.8 4.8H12.5M1.8 9.2H12.5" fill="none" stroke="#5cc23a" stroke-width="1.3"/></svg>
<div class="t" style="left:1759px;top:874.8px;font-size:13.8px;font-weight:normal;color:#2f2f2f;">quantity</div>
<svg class="a" style="left:1737px;top:902.5px" width="14" height="14" viewBox="0 0 14 14"><path d="M5 1.5V12.5M9.3 1.5V12.5M1.8 4.8H12.5M1.8 9.2H12.5" fill="none" stroke="#5cc23a" stroke-width="1.3"/></svg>
<div class="t" style="left:1759px;top:901.0px;font-size:13.8px;font-weight:normal;color:#2f2f2f;">rating</div>
<svg class="a" style="left:1737px;top:928.8px" width="14" height="14" viewBox="0 0 14 14"><path d="M5 1.5V12.5M9.3 1.5V12.5M1.8 4.8H12.5M1.8 9.2H12.5" fill="none" stroke="#5cc23a" stroke-width="1.3"/></svg>
<div class="t" style="left:1759px;top:927.2px;font-size:13.8px;font-weight:normal;color:#2f2f2f;">shipping_cost</div>
<svg class="a" style="left:1737px;top:955.0px" width="14" height="14" viewBox="0 0 14 14"><path d="M5 1.5V12.5M9.3 1.5V12.5M1.8 4.8H12.5M1.8 9.2H12.5" fill="none" stroke="#5cc23a" stroke-width="1.3"/></svg>
<div class="t" style="left:1759px;top:953.5px;font-size:13.8px;font-weight:normal;color:#2f2f2f;">shipping_latitude</div>
<svg class="a" style="left:1737px;top:981.2px" width="14" height="14" viewBox="0 0 14 14"><path d="M5 1.5V12.5M9.3 1.5V12.5M1.8 4.8H12.5M1.8 9.2H12.5" fill="none" stroke="#5cc23a" stroke-width="1.3"/></svg>
<div class="t" style="left:1759px;top:979.8px;font-size:13.8px;font-weight:normal;color:#2f2f2f;">shipping_longitude</div>
<svg class="a" style="left:1737px;top:1007.5px" width="14" height="14" viewBox="0 0 14 14"><path d="M5 1.5V12.5M9.3 1.5V12.5M1.8 4.8H12.5M1.8 9.2H12.5" fill="none" stroke="#5cc23a" stroke-width="1.3"/></svg>
<div class="t" style="left:1759px;top:1006.0px;font-size:13.8px;font-weight:normal;color:#2f2f2f;">shipping_zip</div>
</body></html>
